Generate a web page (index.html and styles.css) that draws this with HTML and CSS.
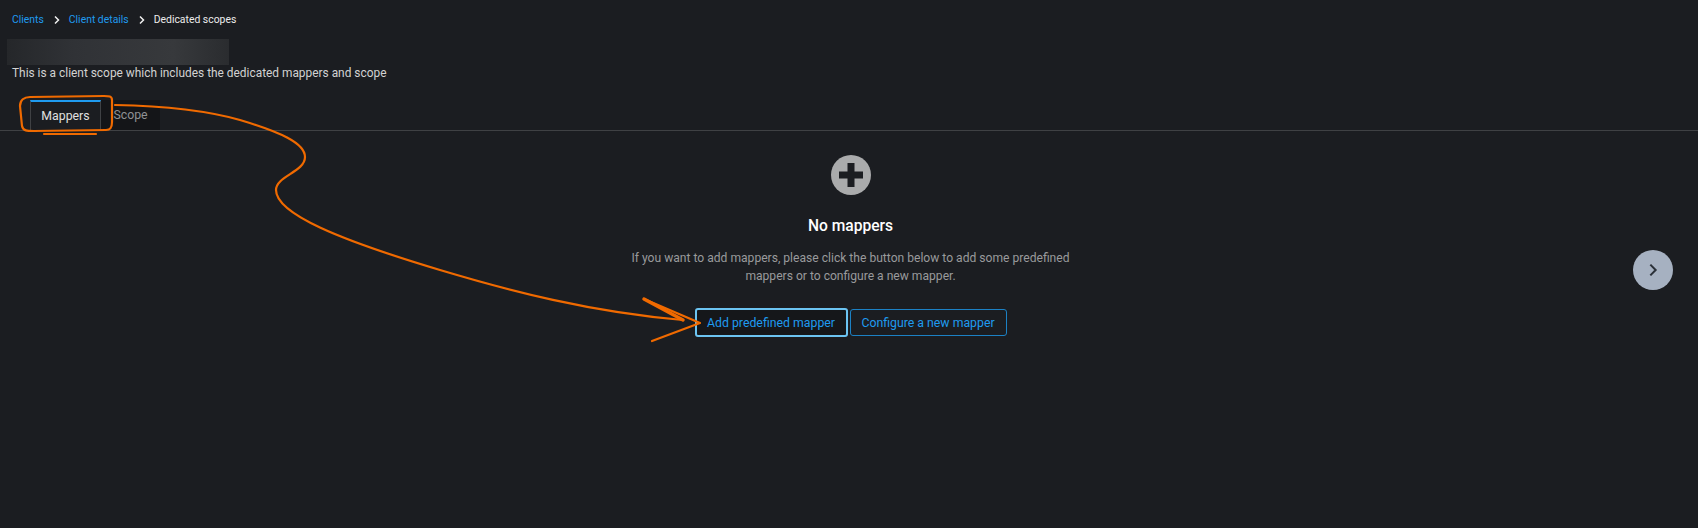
FILE: index.html
```html
<!DOCTYPE html>
<html lang="en">
<head>
    <meta charset="UTF-8">
    <title>Dedicated scopes</title>
    <link rel="stylesheet" href="styles.css">
</head>
<body>

<div class="page">
    <!-- Header -->
    <div class="page-header">
        <nav class="breadcrumb">
            <a href="#">Clients</a>
            <svg class="crumb-sep" viewBox="0 0 8 10"><path d="M2 1.5 5.5 5 2 8.5" /></svg>
            <a href="#">Client details</a>
            <svg class="crumb-sep" viewBox="0 0 8 10"><path d="M2 1.5 5.5 5 2 8.5" /></svg>
            <span>Dedicated scopes</span>
        </nav>
        <div class="blurred-title"></div>
        <p class="description">This is a client scope which includes the dedicated mappers and scope</p>
    </div>

    <!-- Tabs -->
    <div class="tabs">
        <button class="tab tab-active">Mappers</button>
        <button class="tab">Scope</button>
    </div>

    <!-- Empty state -->
    <div class="empty-state">
        <svg class="empty-icon" viewBox="0 0 40 40">
            <circle cx="20" cy="20" r="20" fill="#aaabac" />
            <path d="M16.5 8h7v8.500h8.500v7h-8.500v8.500h-7v-8.500H8v-7h8.500z" fill="#1b1d21" />
        </svg>
        <h2>No mappers</h2>
        <p>If you want to add mappers, please click the button below to add some predefined mappers or to configure a new mapper.</p>
        <div class="actions">
            <button class="btn btn-focus">Add predefined mapper</button>
            <button class="btn">Configure a new mapper</button>
        </div>
    </div>
</div>

<!-- Floating help button -->
<button class="side-btn">
    <svg viewBox="0 0 12 12"><path d="M4 2 8 6 4 10" /></svg>
</button>

<!-- Hand drawn annotation on top of the screenshot -->
<svg class="annotation" viewBox="0 0 1698 528">
    <g fill="none" stroke="#f06a00" stroke-width="2.2" stroke-linecap="round" stroke-linejoin="round">
        <path d="M30 97C24 97 20 100 20 106L22 126C23 131 27 131 34 131L106 130C111 130 112 127 112 122L112 100C112 96 109 96 104 96L30 97Z" />
        <path d="M44 134 96 134" />
        <path d="M115 105C165 106 205 110 240 120C280 132 305 143 305 157C305 172 276 176 276 190C276 214 340 240 440 270C510 291 590 312 683 320" />
        <path d="M644 299 700 323 652 341" />
        <path d="M644 299 683 320" stroke-width="3.5" />
    </g>
</svg>

</body>
</html>
```

FILE: styles.css
```css
* {
    box-sizing: border-box;
}

body {
    font-family: Roboto, Arial, sans-serif;
    background-color: #1b1d21;
    color: #e0e0e0;
    margin: 0;
    height: 528px;
    overflow: hidden;
    position: relative;
}

.page-header {
    padding: 13px 12px 0 12px;
}

.breadcrumb {
    display: flex;
    align-items: center;
    font-size: 10.4px;
    line-height: 14px;
    color: #ececec;
}

.breadcrumb a {
    color: #1f9bf0;
    text-decoration: none;
}

.crumb-sep {
    width: 8px;
    height: 10px;
    margin: 0 8px 0 9px;
    fill: none;
    stroke: #f0f0f0;
    stroke-width: 1.5;
}

.blurred-title {
    width: 222px;
    height: 26px;
    margin: 12px 0 0 -5px;
    background: linear-gradient(90deg, #25272a, #303236 30%, #37393c 75%, #2a2c2f);
}

.description {
    margin: 0;
    font-size: 11.9px;
    line-height: 16px;
    color: #d2d2d2;
}

.tabs {
    display: flex;
    height: 31px;
    margin-top: 19px;
    padding-left: 30px;
    border-bottom: 1px solid #3f4144;
}

.tab {
    width: 59px;
    height: 30px;
    padding: 0;
    border: 0;
    background-color: #141518;
    color: #8f9194;
    font-family: inherit;
    font-size: 12.3px;
}

.tab-active {
    width: 71px;
    background-color: #1b1d21;
    color: #e0e0e0;
    border-top: 2px solid #1f9bf0;
    border-left: 1px solid #3f4144;
    border-right: 1px solid #3f4144;
}

.empty-state {
    display: flex;
    flex-direction: column;
    align-items: center;
    padding-top: 24px;
    margin-left: 3px;
}

.empty-icon {
    width: 40px;
    height: 40px;
}

.empty-state h2 {
    margin: 19px 0 0 0;
    font-size: 15.6px;
    line-height: 24px;
    font-weight: 500;
    color: #fff;
}

.empty-state p {
    width: 470px;
    margin: 11px 0 0 0;
    font-size: 12.1px;
    line-height: 18px;
    text-align: center;
    color: #999a9c;
}

.actions {
    display: flex;
    align-items: center;
    gap: 2px;
    margin-top: 23px;
}

.btn {
    height: 27px;
    width: 157px;
    padding: 0;
    background-color: transparent;
    border: 1px solid #1c81c4;
    border-radius: 3px;
    color: #1f9bf0;
    font-family: inherit;
    font-size: 12.3px;
}

.btn-focus {
    width: 153px;
    height: 29px;
    border: 2px solid #6cc4f2;
    background-color: #15171a;
}

.side-btn {
    position: absolute;
    left: 1633px;
    top: 250px;
    width: 40px;
    height: 40px;
    padding: 12px;
    border: 0;
    border-radius: 50%;
    background-color: #a6b1c1;
}

.side-btn svg {
    display: block;
    fill: none;
    stroke: #2a3038;
    stroke-width: 1.5;
}

.annotation {
    position: absolute;
    left: 0;
    top: 0;
    width: 1698px;
    height: 528px;
    pointer-events: none;
}
```
